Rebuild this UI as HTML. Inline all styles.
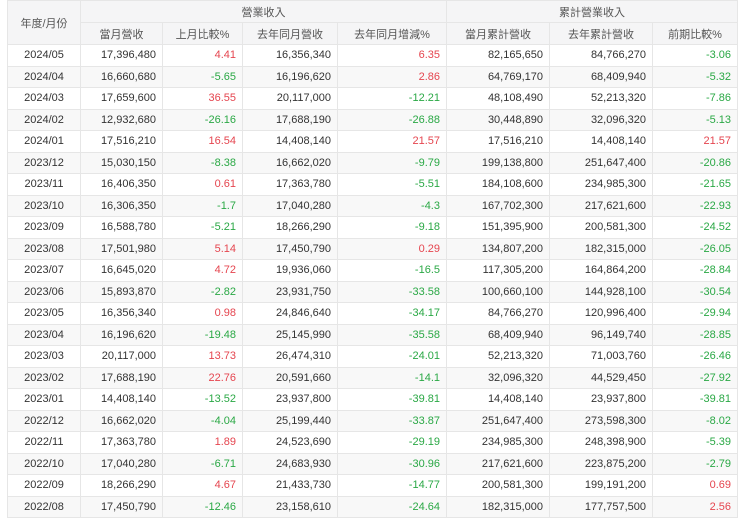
<!DOCTYPE html><html><head><meta charset="utf-8"><style>
body{margin:0;background:#fff;width:740px;height:518px;overflow:hidden;font-family:"Liberation Sans","Noto Sans CJK TC",sans-serif;}
table{position:absolute;left:7px;top:0;border-collapse:collapse;table-layout:fixed;width:730px;font-size:11px;color:#333;}
td,th{border:1px solid #e6e6e6;height:20.5px;padding:0 6px;white-space:nowrap;overflow:hidden}
th{background:#f5f5f6;font-weight:normal;color:#555;text-align:center;height:21px}
td{text-align:right}
td:first-child{text-align:center}
tbody tr:nth-child(even) td{background:#f8f8f8}
.r{color:#e5454f}.g{color:#2aa845}
</style></head><body>
<table>
<colgroup><col style="width:73px"><col style="width:82px"><col style="width:80px"><col style="width:95px"><col style="width:109px"><col style="width:103px"><col style="width:103px"><col style="width:85px"></colgroup>
<thead>
<tr><th rowspan="2">年度/月份</th><th colspan="4">營業收入</th><th colspan="3">累計營業收入</th></tr>
<tr><th>當月營收</th><th>上月比較%</th><th>去年同月營收</th><th>去年同月增減%</th><th>當月累計營收</th><th>去年累計營收</th><th>前期比較%</th></tr>
</thead>
<tbody>
<tr><td>2024/05</td><td>17,396,480</td><td class="r">4.41</td><td>16,356,340</td><td class="r">6.35</td><td>82,165,650</td><td>84,766,270</td><td class="g">-3.06</td></tr>
<tr><td>2024/04</td><td>16,660,680</td><td class="g">-5.65</td><td>16,196,620</td><td class="r">2.86</td><td>64,769,170</td><td>68,409,940</td><td class="g">-5.32</td></tr>
<tr><td>2024/03</td><td>17,659,600</td><td class="r">36.55</td><td>20,117,000</td><td class="g">-12.21</td><td>48,108,490</td><td>52,213,320</td><td class="g">-7.86</td></tr>
<tr><td>2024/02</td><td>12,932,680</td><td class="g">-26.16</td><td>17,688,190</td><td class="g">-26.88</td><td>30,448,890</td><td>32,096,320</td><td class="g">-5.13</td></tr>
<tr><td>2024/01</td><td>17,516,210</td><td class="r">16.54</td><td>14,408,140</td><td class="r">21.57</td><td>17,516,210</td><td>14,408,140</td><td class="r">21.57</td></tr>
<tr><td>2023/12</td><td>15,030,150</td><td class="g">-8.38</td><td>16,662,020</td><td class="g">-9.79</td><td>199,138,800</td><td>251,647,400</td><td class="g">-20.86</td></tr>
<tr><td>2023/11</td><td>16,406,350</td><td class="r">0.61</td><td>17,363,780</td><td class="g">-5.51</td><td>184,108,600</td><td>234,985,300</td><td class="g">-21.65</td></tr>
<tr><td>2023/10</td><td>16,306,350</td><td class="g">-1.7</td><td>17,040,280</td><td class="g">-4.3</td><td>167,702,300</td><td>217,621,600</td><td class="g">-22.93</td></tr>
<tr><td>2023/09</td><td>16,588,780</td><td class="g">-5.21</td><td>18,266,290</td><td class="g">-9.18</td><td>151,395,900</td><td>200,581,300</td><td class="g">-24.52</td></tr>
<tr><td>2023/08</td><td>17,501,980</td><td class="r">5.14</td><td>17,450,790</td><td class="r">0.29</td><td>134,807,200</td><td>182,315,000</td><td class="g">-26.05</td></tr>
<tr><td>2023/07</td><td>16,645,020</td><td class="r">4.72</td><td>19,936,060</td><td class="g">-16.5</td><td>117,305,200</td><td>164,864,200</td><td class="g">-28.84</td></tr>
<tr><td>2023/06</td><td>15,893,870</td><td class="g">-2.82</td><td>23,931,750</td><td class="g">-33.58</td><td>100,660,100</td><td>144,928,100</td><td class="g">-30.54</td></tr>
<tr><td>2023/05</td><td>16,356,340</td><td class="r">0.98</td><td>24,846,640</td><td class="g">-34.17</td><td>84,766,270</td><td>120,996,400</td><td class="g">-29.94</td></tr>
<tr><td>2023/04</td><td>16,196,620</td><td class="g">-19.48</td><td>25,145,990</td><td class="g">-35.58</td><td>68,409,940</td><td>96,149,740</td><td class="g">-28.85</td></tr>
<tr><td>2023/03</td><td>20,117,000</td><td class="r">13.73</td><td>26,474,310</td><td class="g">-24.01</td><td>52,213,320</td><td>71,003,760</td><td class="g">-26.46</td></tr>
<tr><td>2023/02</td><td>17,688,190</td><td class="r">22.76</td><td>20,591,660</td><td class="g">-14.1</td><td>32,096,320</td><td>44,529,450</td><td class="g">-27.92</td></tr>
<tr><td>2023/01</td><td>14,408,140</td><td class="g">-13.52</td><td>23,937,800</td><td class="g">-39.81</td><td>14,408,140</td><td>23,937,800</td><td class="g">-39.81</td></tr>
<tr><td>2022/12</td><td>16,662,020</td><td class="g">-4.04</td><td>25,199,440</td><td class="g">-33.87</td><td>251,647,400</td><td>273,598,300</td><td class="g">-8.02</td></tr>
<tr><td>2022/11</td><td>17,363,780</td><td class="r">1.89</td><td>24,523,690</td><td class="g">-29.19</td><td>234,985,300</td><td>248,398,900</td><td class="g">-5.39</td></tr>
<tr><td>2022/10</td><td>17,040,280</td><td class="g">-6.71</td><td>24,683,930</td><td class="g">-30.96</td><td>217,621,600</td><td>223,875,200</td><td class="g">-2.79</td></tr>
<tr><td>2022/09</td><td>18,266,290</td><td class="r">4.67</td><td>21,433,730</td><td class="g">-14.77</td><td>200,581,300</td><td>199,191,200</td><td class="r">0.69</td></tr>
<tr><td>2022/08</td><td>17,450,790</td><td class="g">-12.46</td><td>23,158,610</td><td class="g">-24.64</td><td>182,315,000</td><td>177,757,500</td><td class="r">2.56</td></tr>
</tbody></table>
</body></html>
